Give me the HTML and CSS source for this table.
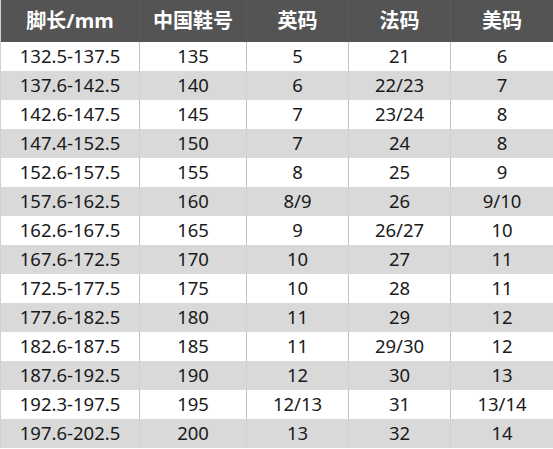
FILE: index.html
```html
<!DOCTYPE html>
<html lang="zh">
<head>
<meta charset="utf-8">
<link rel="stylesheet" href="styles.css">
</head>
<body>
<table class="size-table">
  <colgroup>
    <col class="c1"><col class="c2"><col class="c3"><col class="c4"><col class="c5">
  </colgroup>
  <thead>
    <tr><th>脚长/mm</th><th>中国鞋号</th><th>英码</th><th>法码</th><th>美码</th></tr>
  </thead>
  <tbody>
    <tr><td>132.5-137.5</td><td>135</td><td>5</td><td>21</td><td>6</td></tr>
    <tr><td>137.6-142.5</td><td>140</td><td>6</td><td>22/23</td><td>7</td></tr>
    <tr><td>142.6-147.5</td><td>145</td><td>7</td><td>23/24</td><td>8</td></tr>
    <tr><td>147.4-152.5</td><td>150</td><td>7</td><td>24</td><td>8</td></tr>
    <tr><td>152.6-157.5</td><td>155</td><td>8</td><td>25</td><td>9</td></tr>
    <tr><td>157.6-162.5</td><td>160</td><td>8/9</td><td>26</td><td>9/10</td></tr>
    <tr><td>162.6-167.5</td><td>165</td><td>9</td><td>26/27</td><td>10</td></tr>
    <tr><td>167.6-172.5</td><td>170</td><td>10</td><td>27</td><td>11</td></tr>
    <tr><td>172.5-177.5</td><td>175</td><td>10</td><td>28</td><td>11</td></tr>
    <tr><td>177.6-182.5</td><td>180</td><td>11</td><td>29</td><td>12</td></tr>
    <tr><td>182.6-187.5</td><td>185</td><td>11</td><td>29/30</td><td>12</td></tr>
    <tr><td>187.6-192.5</td><td>190</td><td>12</td><td>30</td><td>13</td></tr>
    <tr><td>192.3-197.5</td><td>195</td><td>12/13</td><td>31</td><td>13/14</td></tr>
    <tr><td>197.6-202.5</td><td>200</td><td>13</td><td>32</td><td>14</td></tr>
  </tbody>
</table>
</body>
</html>
```
FILE: styles.css
```css
html, body {
  margin: 0;
  padding: 0;
  background: #ffffff;
}
.size-table {
  width: 553px;
  border-collapse: collapse;
  table-layout: fixed;
  font-family: "Noto Sans", "Noto Sans CJK SC", sans-serif;
  color: #1a1a1a;
}
.c1 { width: 139px; }
.c2 { width: 107px; }
.c3 { width: 102px; }
.c4 { width: 102px; }
.c5 { width: 103px; }
.size-table th {
  height: 42px;
  padding: 0;
  background: #545454;
  color: #ffffff;
  font-family: "Noto Sans", "Noto Sans CJK SC", sans-serif;
  font-weight: 700;
  font-size: 20px;
  line-height: 1;
  text-align: center;
  border-left: 1px solid #5c5c5c;
}
.size-table td {
  height: 29px;
  padding: 0;
  font-size: 18.5px;
  text-align: center;
  border-left: 1px solid #c0c0c0;
  line-height: 1;
}
.size-table tbody tr:nth-child(even) td {
  background: #d9d9d9;
  border-left-color: #d2d2d2;
}
.size-table th:first-child,
.size-table td:first-child {
  border-left-color: #d0d0d0;
}
.size-table th:last-child,
.size-table td:last-child {
  border-right: 1px solid #d0d0d0;
}
```
